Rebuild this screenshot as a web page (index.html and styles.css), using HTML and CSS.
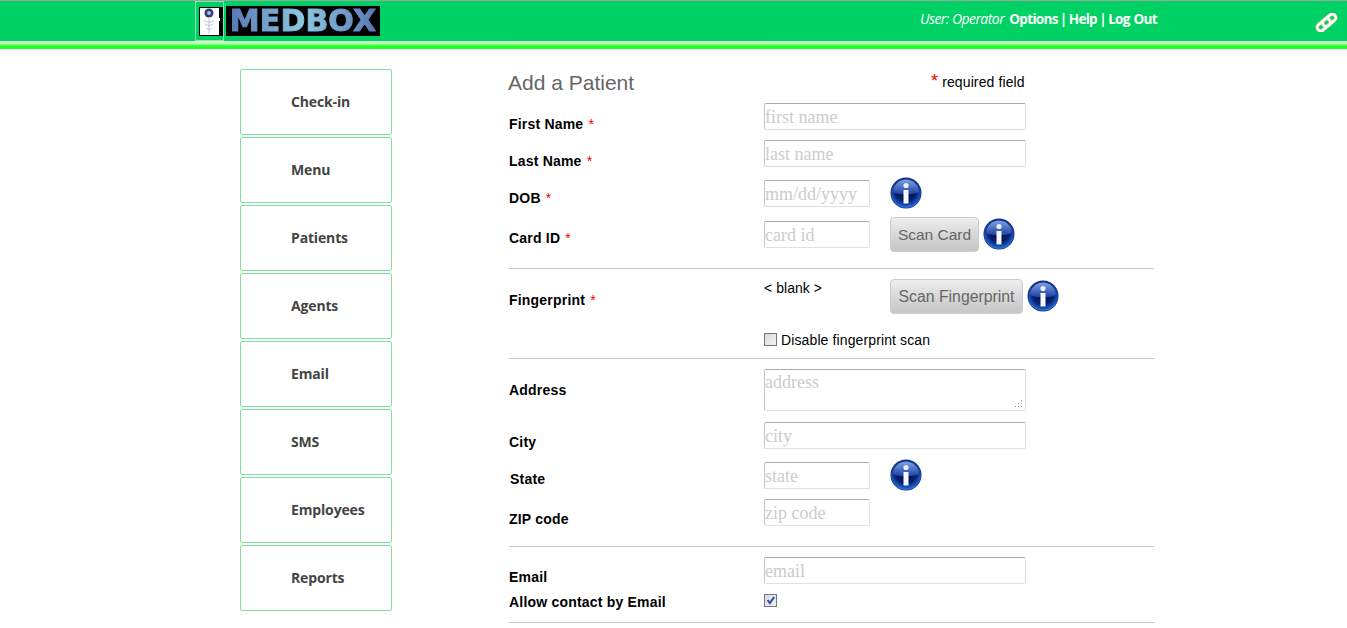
FILE: index.html
```html
<!DOCTYPE html>
<html lang="en">
<head>
<meta charset="utf-8">
<title>MEDBOX - Add a Patient</title>
<link rel="stylesheet" href="styles.css">
</head>
<body>
<svg class="defs" width="0" height="0" aria-hidden="true">
  <defs>
    <radialGradient id="infoBase" cx="0.5" cy="0.42" r="0.6">
      <stop offset="0" stop-color="#020c3c"/>
      <stop offset="0.6" stop-color="#071f6c"/>
      <stop offset="0.85" stop-color="#1a55c0"/>
      <stop offset="1" stop-color="#3d8ef0"/>
    </radialGradient>
    <linearGradient id="infoCap" x1="0" y1="0" x2="0" y2="1">
      <stop offset="0" stop-color="#7fa2e6"/>
      <stop offset="1" stop-color="#1d3f9e"/>
    </linearGradient>
    <symbol id="info" viewBox="0 0 32 32">
      <circle cx="16" cy="16" r="15.500" fill="#12307e"/>
      <circle cx="16" cy="16" r="14.800" fill="url(#infoBase)"/>
      <path d="M3 15C3 8 9 2.500 16 2.500S29 8 29 15C24 18 8 18 3 15Z" fill="url(#infoCap)"/>
      <circle cx="16" cy="8.500" r="2.600" fill="#e8eefc"/>
      <rect x="13.500" y="13" width="5" height="13.500" fill="#f4f7fe"/>
    </symbol>
  </defs>
</svg>

<header class="topbar">
  <div class="brand">
    <div class="brand-frame">
      <div class="brand-pic">
        <svg width="24" height="29" viewBox="0 0 24 29">
          <rect x="1" y="1" width="19" height="27" fill="#fff"/>
          <rect x="20" y="11" width="1" height="3" fill="#fff"/>
          <circle cx="10" cy="6" r="4.500" fill="#2f3f70"/>
          <circle cx="10" cy="6" r="2" fill="#aab8dc"/>
          <path d="M10 10V27M5 13c3 3 7 3 10 0M6 17c3 2 5 2 8 0M7 21c2 2 4 2 6 0" stroke="#b9c3dd" stroke-width="1" fill="none"/>
        </svg>
      </div>
    </div>
    <div class="brand-name"><span class="brand-text">MEDBOX</span></div>
  </div>
  <nav class="toplinks">
    <em class="user">User: Operator</em>
    <a href="#">Options</a> | <a href="#">Help</a> | <a href="#">Log Out</a>
  </nav>
  <svg class="chain" width="23" height="19" viewBox="0 0 23 19">
    <g fill="none" transform="translate(11.500 9.500) rotate(-40)">
      <rect x="-11" y="-3.500" width="15" height="7" rx="3.500" stroke="#b6c98a" stroke-width="3.800"/>
      <rect x="-4" y="-3.500" width="15" height="7" rx="3.500" stroke="#b6c98a" stroke-width="3.800"/>
      <rect x="-11" y="-3.500" width="15" height="7" rx="3.500" stroke="#fff" stroke-width="2.400"/>
      <rect x="-4" y="-3.500" width="15" height="7" rx="3.500" stroke="#fff" stroke-width="2.400"/>
    </g>
  </svg>
</header>
<div class="band"></div>

<div class="page">
  <aside class="sidenav">
    <a href="#">Check-in</a>
    <a href="#">Menu</a>
    <a href="#">Patients</a>
    <a href="#">Agents</a>
    <a href="#">Email</a>
    <a href="#">SMS</a>
    <a href="#">Employees</a>
    <a href="#">Reports</a>
  </aside>

  <main class="form">
    <div class="form-head">
      <h1>Add a Patient</h1>
      <p class="legend"><span class="req big">*</span> required field</p>
    </div>

    <div class="row">
      <label class="p14">First Name <span class="req">*</span></label>
      <input class="wide" placeholder="first name">
    </div>
    <div class="row gap10">
      <label class="p14">Last Name <span class="req">*</span></label>
      <input class="wide" placeholder="last name">
    </div>
    <div class="row gap13">
      <label class="p11">DOB <span class="req">*</span></label>
      <input class="short" placeholder="mm/dd/yyyy">
      <svg class="info i-solo"><use href="#info"/></svg>
    </div>
    <div class="row gap14">
      <label class="p10">Card ID <span class="req">*</span></label>
      <input class="short" placeholder="card id">
      <button class="btn" type="button">Scan Card</button>
      <svg class="info i-btn"><use href="#info"/></svg>
    </div>
    <hr class="rule rule-a">

    <div class="row r-print">
      <label class="p14">Fingerprint <span class="req">*</span></label>
      <span class="blank">&lt; blank &gt;</span>
      <button class="btn btn-print" type="button">Scan Fingerprint</button>
      <svg class="info i-print"><use href="#info"/></svg>
    </div>
    <div class="row r-disable">
      <label class="spacer"></label>
      <span class="check-line"><input class="box" type="checkbox"> Disable fingerprint scan</span>
    </div>
    <hr class="rule rule-b">

    <div class="row r-addr">
      <label class="p14">Address</label>
      <div class="area-wrap">
        <textarea class="wide area" placeholder="address"></textarea>
        <svg class="grip" width="8" height="8" viewBox="0 0 8 8">
          <g fill="#8a8a8a">
            <rect x="6" y="0" width="1" height="1"/>
            <rect x="3" y="3" width="1" height="1"/><rect x="6" y="3" width="1" height="1"/>
            <rect x="0" y="6" width="1" height="1"/><rect x="3" y="6" width="1" height="1"/><rect x="6" y="6" width="1" height="1"/>
          </g>
        </svg>
      </div>
    </div>
    <div class="row gap11">
      <label class="p13">City</label>
      <input class="wide" placeholder="city">
    </div>
    <div class="row gap13">
      <label class="p10 nudge">State</label>
      <input class="short" placeholder="state">
      <svg class="info i-solo"><use href="#info"/></svg>
    </div>
    <div class="row gap10">
      <label class="p13">ZIP code</label>
      <input class="short" placeholder="zip code">
    </div>
    <hr class="rule rule-c">

    <div class="row gap10">
      <label class="p13">Email</label>
      <input class="wide" placeholder="email">
    </div>
    <div class="row r-allow">
      <label class="p1">Allow contact by Email</label>
      <input class="box" type="checkbox" checked>
    </div>
    <hr class="rule rule-d">
  </main>
</div>
</body>
</html>
```

FILE: styles.css
```css
* { box-sizing: border-box; }
html, body { margin: 0; padding: 0; background: #fff; height: 628px; overflow: hidden; }
body { font-family: "Liberation Sans", Arial, sans-serif; font-size: 14px; color: #000; }
.defs { position: absolute; }

.topbar {
  height: 41px;
  background: #00d164;
  border-top: 1px solid #9aa59f;
  display: flex;
  padding-left: 195px;
  color: #fff;
}
.band { height: 8px; background: linear-gradient(#d8ffd8 0, #a6ffa6 3px, #22ff22 5px, #22ff22 8px); }

.brand { display: flex; height: 40px; }
.brand-frame {
  width: 29px; height: 40px;
  border: 1px solid #8fe6b5;
  padding: 5px 0 0 3px;
}
.brand-pic { width: 24px; height: 29px; background: #000; line-height: 0; overflow: hidden; }
.brand-name {
  margin: 5px 0 0 2px;
  width: 154px; height: 30px;
  background: #000;
  display: flex;
  justify-content: center;
}
.brand-text {
  font: 900 30px/30px "DejaVu Sans", sans-serif;
  letter-spacing: 0.1px;
  -webkit-text-stroke: 1px transparent;
  background: linear-gradient(90deg, #5a78b8 0, #8cc8e0 50%, #5a78b8 100%);
  -webkit-background-clip: text;
  background-clip: text;
  color: transparent;
}

.toplinks {
  margin-left: 540px;
  padding-top: 8px;
  font: 700 13.500px/20px "Open Sans", sans-serif;
  letter-spacing: -0.7px;
  word-spacing: -0.6px;
  white-space: nowrap;
}
.toplinks a { color: #fff; text-decoration: none; word-spacing: 1px; }
.user { font-weight: 400; font-size: 14px; margin-right: 3px; letter-spacing: -0.55px; word-spacing: 0; }
.chain { margin-left: auto; margin-right: 9px; margin-top: 12px; }

.page { display: flex; padding: 20px 0 0 240px; }
.sidenav { width: 152px; display: flex; flex-direction: column; gap: 2px; flex: none; }
.sidenav a {
  height: 66px;
  border: 1px solid #7fe39c;
  border-radius: 2px;
  padding: 0 0 2px 50px;
  display: flex; align-items: center;
  font: 700 14px "Open Sans", sans-serif;
  letter-spacing: -0.15px;
  color: #444;
  text-decoration: none;
}

.form { width: 645px; margin-left: 117px; }
.form-head { display: flex; height: 34px; }
h1 { margin: 0 0 0 -1px; font-size: 21px; line-height: 28px; font-weight: 400; color: #666; width: 423px; }
.legend { margin: 0; font-size: 14px; line-height: 18px; padding-top: 4px; letter-spacing: .12px; }
.req { color: #e00; font-weight: 400; }
.row label .req { margin-left: 1px; }
.big { font-size: 18px; line-height: 14px; }

.row { display: flex; align-items: flex-start; height: 27px; }
.row label { width: 255px; flex: none; font-weight: 700; font-size: 14px; line-height: 14px; letter-spacing: .2px; }
.p1 { padding-top: 1px; }
.p10 { padding-top: 10px; }
.p11 { padding-top: 11px; }
.p13 { padding-top: 13px; }
.p14 { padding-top: 14px; }
.nudge { padding-left: 1px; }

input:not(.box), textarea {
  font: 18px "Liberation Serif", serif;
  height: 27px;
  border: 1px solid #dde0e8;
  border-top-color: #a8a8ae;
  border-left-color: #c4c6cc;
  border-radius: 2px;
  padding: 2px 0 0;
  margin: 0;
  background: #fff;
  outline: none;
}
::placeholder { color: #ccc; opacity: 1; }
.wide { width: 262px; }
.short { width: 106px; }
.area-wrap { position: relative; width: 262px; height: 42px; }
textarea.area { display: block; height: 42px; resize: none; padding-top: 2px; }
.grip { position: absolute; right: 3px; bottom: 3px; }

.gap10 { margin-top: 10px; }
.gap11 { margin-top: 11px; }
.gap13 { margin-top: 13px; }
.gap14 { margin-top: 14px; }

.info { width: 32px; height: 32px; flex: none; }
.i-solo { margin: -3px 0 0 20px; }
.i-btn { margin: -3px 0 0 4px; }
.i-print { margin: 1px 0 0 4px; }

.btn {
  margin: -4px 0 0 20px;
  height: 35px;
  width: 89px;
  padding: 0;
  flex: none;
  font: 15.500px "Liberation Sans", sans-serif;
  color: #666;
  border: 1px solid #ccc;
  border-radius: 4px;
  background: linear-gradient(#eeeeee, #d8d8d8 50%, #c6c6c6);
}
.btn-print { width: 133px; margin-top: 0; font-size: 15.800px; }

.rule { border: 0; border-top: 1px solid #c0cccc; height: 0; margin: 0; }
.rule-a { margin-top: 20px; }
.r-print { margin-top: 10px; height: 54px; }
.blank { width: 106px; line-height: 16px; padding-top: 1px; letter-spacing: .05px; }
.r-disable { height: 13px; }
.check-line { display: flex; align-items: center; height: 13px; letter-spacing: .12px; }
.box {
  appearance: none;
  -webkit-appearance: none;
  position: relative;
  flex: none;
  width: 13px; height: 13px;
  margin: 0 4px 0 0;
  border: 1px solid #777;
  background: linear-gradient(135deg, #d8d8d8, #f4f4f4);
}
.box:checked { background: linear-gradient(135deg, #d6d9e6, #eef0f6); }
.box:checked::after {
  content: "";
  position: absolute;
  inset: 1px;
  background: #2f4f9c;
  clip-path: polygon(8% 50%, 30% 40%, 42% 62%, 82% 6%, 100% 18%, 44% 98%);
}
.rule-b { margin-top: 12px; }
.r-addr { margin-top: 10px; height: 42px; }
.rule-c { margin-top: 20px; }
.r-allow { margin-top: 10px; height: 13px; }
.rule-d { margin-top: 15px; }
```
